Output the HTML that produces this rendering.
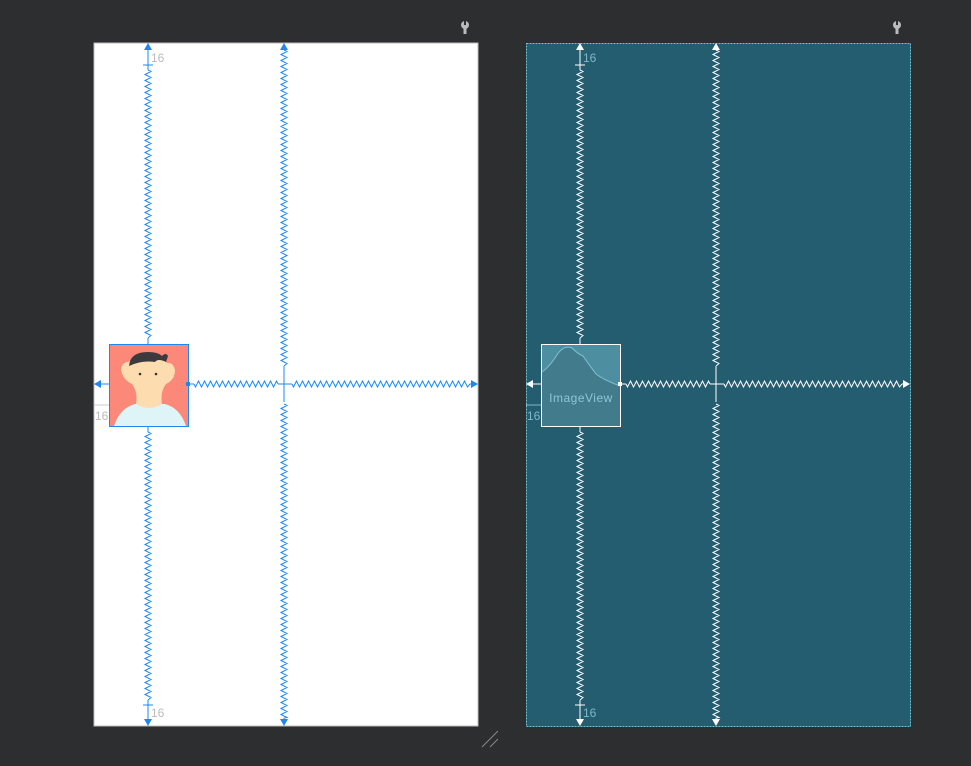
<!DOCTYPE html>
<html><head><meta charset="utf-8"><style>
html,body{margin:0;padding:0;background:#2d2e30;width:971px;height:766px;overflow:hidden}
svg{position:absolute;left:0;top:0}
text{font-family:"Liberation Sans",sans-serif;font-size:12px}
</style></head><body>
<svg id="s" width="971" height="766" xmlns="http://www.w3.org/2000/svg">
<rect x="94" y="43" width="384" height="683" fill="#fff" stroke="#bbb" stroke-width="1"/>
<rect x="526.5" y="43.5" width="384" height="683" fill="#235d6f" stroke="#6fc6d8" stroke-width="1" stroke-dasharray="2,1"/>
<g id="L"></g><g id="R"></g>
<g>
<rect x="109.5" y="344.5" width="79" height="82" fill="#fb8878"/>
<path d="M114 426 Q120 408 135 404 L165 404 Q180 408 186 426 Z" fill="#def4f6"/>
<path d="M128 362 Q122 362 121 370 Q123 380 132 384 Q138 392 136 404 Q149 412 162 404 Q160 392 166 384 Q175 380 175 370 Q173 362 167 363 L166 362 Q149 350 128 362Z" fill="#fddcb0"/>
<path d="M129 366 Q130 352 148 352 Q158 352 162 356 Q166 352 168 356 L166 362 Q158 358 155 362 Q142 360 129 366Z" fill="#3c3a3c"/>
<circle cx="140" cy="374" r="1.3" fill="#333"/><circle cx="156" cy="374" r="1.3" fill="#333"/>
<rect x="109.5" y="344.5" width="79" height="82" fill="none" stroke="#1e88f0"/>
<rect x="186" y="382" width="4" height="4" fill="#1e88f0"/>
</g>
<g>
<rect x="541.5" y="344.5" width="79" height="82" fill="#427b8c" stroke="#fff"/>
<path d="M542 372 Q548 368 555 358 Q563 344 572 348 Q578 354 583 356 Q590 366 596 374 Q604 380 620 386 L620 345 L542 345Z" fill="#4d8fa1"/>
<path d="M542 372 Q548 368 555 358 Q563 344 572 348 Q578 354 583 356 Q590 366 596 374 Q604 380 620 386" fill="none" stroke="#7fc0d2" stroke-width="1"/>
<text x="581" y="402" text-anchor="middle" fill="#8ec7d6" font-size="10" letter-spacing="0.5">ImageView</text>
<rect x="618" y="382" width="4" height="4" fill="#fff"/>
</g>
<text x="151" y="62" fill="#bbb">16</text>
<text x="151" y="717" fill="#bbb">16</text>
<text x="95" y="420" fill="#bbb">16</text>
<text x="583" y="62" fill="#7fb7c6">16</text>
<text x="583" y="717" fill="#7fb7c6">16</text>
<text x="527" y="420" fill="#7fb7c6">16</text>
<path d="M94 405 H109" stroke="#ccc"/><path d="M526 405 H541" stroke="#7fb7c6"/>
<g fill="#bbb"><circle cx="465" cy="25" r="4"/><rect x="463.5" y="26" width="3" height="8"/><circle cx="897" cy="25" r="4"/><rect x="895.5" y="26" width="3" height="8"/></g>
<g fill="#2d2e30"><rect x="464" y="20" width="2" height="5"/><rect x="896" y="20" width="2" height="5"/></g>
<path d="M482 747 L498 731 M490 747 L498 739" stroke="#888" stroke-width="1"/>
</svg>
<script>
function z(g,col,off){
 var o='';
 function zv(x,y1,y2){var d='M'+x+' '+y1;var s=1;for(var y=y1+1.5;y<y2;y+=3){d+=' L'+(x+3*s)+' '+y;s=-s}d+=' L'+x+' '+y2;return d}
 function zh(y,x1,x2){var d='M'+x1+' '+y;var s=1;for(var x=x1+1.5;x<x2;x+=3){d+=' L'+x+' '+(y+3*s);s=-s}d+=' L'+x2+' '+y;return d}
 var X=148+off,Y=384,X2=284+off;
 var p='';
 p+='M'+X+' 47 V70 '+zv(X,70,338)+' M'+X+' 338 V344';
 p+=' M'+(X-5)+' 65 H'+(X+5);
 p+=' M'+X+' 427 V432 '+zv(X,432,700)+' M'+X+' 700 V722 M'+(X-5)+' 705 H'+(X+5);
 p+=' M'+X2+' 47 '+zv(X2,50,366)+' M'+X2+' 366 V402 '+zv(X2,404,718)+' M'+X2+' 718 V722';
 p+=' M'+(190+off)+' '+Y+' H'+(194+off)+' '+zh(Y,194+off,278+off)+' M'+(278+off)+' '+Y+' H'+(292+off)+' '+zh(Y,292+off,470+off)+' M'+(470+off)+' '+Y+' H'+(474+off);
 p+=' M'+(98+off)+' '+Y+' H'+(109+off);
 o+='<path d="'+p+'" fill="none" stroke="'+col+'" stroke-width="1"/>';
 var a='M'+(X-4)+' 50 L'+X+' 43 L'+(X+4)+' 50Z M'+(X-4)+' 719 L'+X+' 726 L'+(X+4)+' 719Z';
 a+=' M'+(X2-4)+' 50 L'+X2+' 43 L'+(X2+4)+' 50Z M'+(X2-4)+' 719 L'+X2+' 726 L'+(X2+4)+' 719Z';
 a+=' M'+(471+off)+' '+(Y-4)+' L'+(478+off)+' '+Y+' L'+(471+off)+' '+(Y+4)+'Z';
 a+=' M'+(101+off)+' '+(Y-4)+' L'+(94+off)+' '+Y+' L'+(101+off)+' '+(Y+4)+'Z';
 o+='<path d="'+a+'" fill="'+col+'"/>';
 document.getElementById(g).innerHTML=o;
}
z('L','#1e88f0',0);z('R','#ffffff',432);
</script>
</body></html>
